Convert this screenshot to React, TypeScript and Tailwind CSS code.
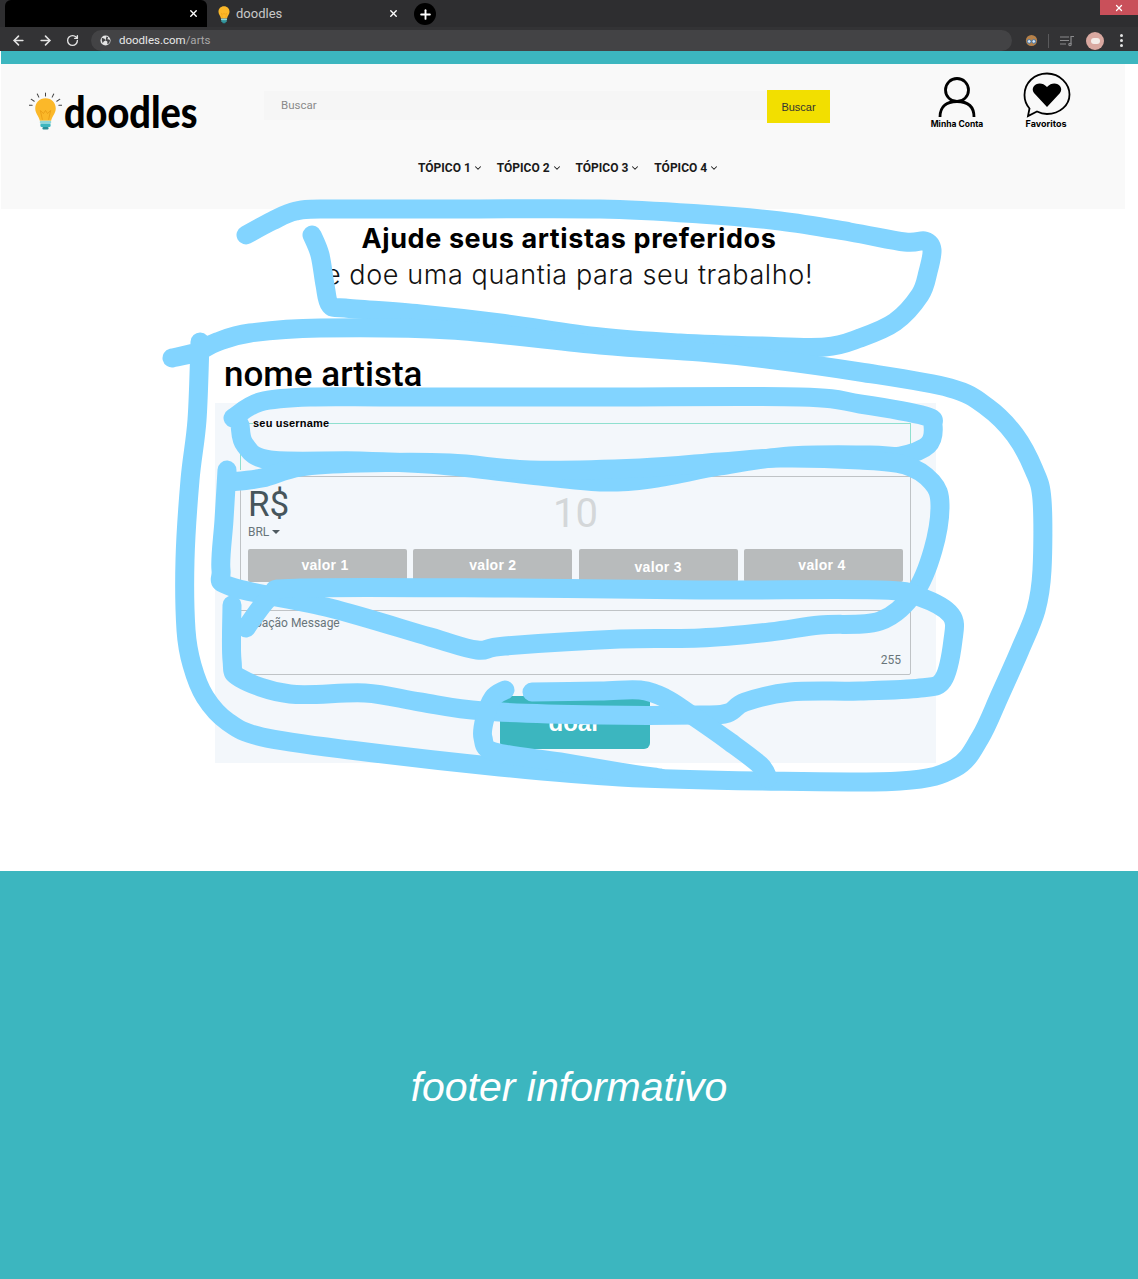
import React from 'react';
import { ArrowLeft, ArrowRight, RotateCw, X, Plus, ChevronDown } from 'lucide-react';

type Pt = [number, number];

// caminhos do rabisco azul por cima da página
const scribbles: Pt[][] = [
  [[246,235],[272,221],[296,211],[330,209],[460,209],[600,209],[700,214],[780,221],[850,232],[905,242],[925,241],[932,250],[928,272],[920,295],[895,322],[860,338],[825,347],[760,346],[680,343],[600,337],[500,323],[420,314],[345,308],[330,305],[325,285],[320,255],[312,235]],
  [[172,358],[197,352],[217,342],[250,333],[320,328],[450,330],[600,345],[700,352],[767,359],[860,372],[950,388],[987,407],[1015,435],[1034,470],[1042,500],[1042,570],[1036,610],[1020,650],[1000,695],[980,738],[955,768],[900,781],[760,781],[620,777],[500,767],[350,750],[262,737],[228,722],[205,697],[192,665],[186,630],[185,560],[190,480],[197,420],[200,342]],
  [[233,418],[260,402],[310,397],[400,397],[600,397],[800,397],[860,404],[925,416],[933,425],[928,445],[900,456],[870,455],[790,456],[720,466],[650,479],[600,482],[530,475],[440,465],[360,461],[270,460],[245,445],[240,425]],
  [[227,470],[224,520],[221,570],[232,587],[330,608],[430,637],[477,650],[505,646],[620,639],[700,638],[770,632],[820,625],[880,621],[915,592],[933,550],[940,505],[932,482],[905,465],[860,460],[780,458],[720,462],[640,468],[530,470],[450,463],[360,463],[300,467],[262,478],[228,482]],
  [[232,605],[232,660],[240,678],[290,694],[365,693],[420,702],[483,711],[600,715],[700,715],[728,713],[745,702],[790,692],[860,691],[920,688],[943,680],[953,640],[951,615],[920,597],[880,590],[700,590],[500,588],[300,588],[272,595],[246,628]],
  [[505,690],[493,698],[485,718],[483,738],[495,752],[560,762],[620,772],[660,778]],
  [[532,692],[600,691],[640,690],[665,698],[690,714],[730,742],[760,765],[768,778]],
];

// curva suave passando pelos pontos
const toPath = (pts: Pt[]) => {
  let d = `M${pts[0][0]} ${pts[0][1]}`;
  for (let i = 0; i < pts.length - 1; i++) {
    const p0 = pts[Math.max(i - 1, 0)];
    const p1 = pts[i];
    const p2 = pts[i + 1];
    const p3 = pts[Math.min(i + 2, pts.length - 1)];
    d += ` C${p1[0] + (p2[0] - p0[0]) / 6} ${p1[1] + (p2[1] - p0[1]) / 6} ${p2[0] - (p3[0] - p1[0]) / 6} ${p2[1] - (p3[1] - p1[1]) / 6} ${p2[0]} ${p2[1]}`;
  }
  return d;
};

const Bulb: React.FC<{ className?: string; rays?: boolean }> = ({ className, rays }) => (
  <svg viewBox="0 0 32 38" className={className}>
    {rays && (
      <g stroke="#444" strokeWidth="1" strokeLinecap="round">
        <path d="M16 1v3M8 2l1.5 3M24 2l-1.5 3M2 7l3 2M30 7l-3 2M0 13h3M32 13h-3" />
      </g>
    )}
    <path d="M16 6c-6 0-10 4.400-10 10 0 5 3.500 7 4.500 12h11c1-5 4.500-7 4.500-12 0-5.600-4-10-10-10z" fill="#fbb829" />
    <path d="M13 27l-2-9 3 3 2-3 2 3 3-3-2 9" fill="none" stroke="#e89b14" strokeWidth="0.8" />
    <rect x="10.500" y="28" width="11" height="3" rx="1" fill="#8fd6d8" />
    <rect x="11" y="31" width="10" height="3" rx="1" fill="#3cb6bf" />
    <rect x="13" y="34" width="6" height="2.500" rx="1" fill="#2a8f98" />
  </svg>
);

const topics = ['TÓPICO 1', 'TÓPICO 2', 'TÓPICO 3', 'TÓPICO 4'];
const amounts = [
  { label: 'valor 1', cls: 'pr-[5px]' },
  { label: 'valor 2', cls: '' },
  { label: 'valor 3', cls: 'pt-[3px]' },
  { label: 'valor 4', cls: 'pr-[3px]' },
];

export default function App() {
  return (
    <div className="relative w-[1138px] h-[1279px] overflow-hidden bg-white font-['Roboto',sans-serif]">
      {/* barra de abas */}
      <div className="h-[27px] bg-[#2e2e30] flex items-end">
        <div className="ml-[5px] w-[202px] h-[27px] bg-black rounded-t-md flex items-center justify-end pr-[8px]">
          <X size={11} strokeWidth={3} className="text-white" />
        </div>
        <div className="w-[200px] h-[27px] flex items-center pl-[8px] pr-[8px]">
          <Bulb className="w-[18px] h-[21px] mr-[3px]" />
          <span className="text-[13px] pt-px text-[#c8c8c8] flex-1">doodles</span>
          <X size={11} strokeWidth={3} className="text-white" />
        </div>
        <div className="ml-[7px] mb-[2px] w-[22px] h-[22px] rounded-full bg-black flex items-center justify-center">
          <Plus size={15} strokeWidth={3} className="text-white" />
        </div>
        <div className="ml-auto self-start w-[38px] h-[15px] bg-[#c9505a] flex items-center justify-center">
          <X size={10} strokeWidth={3} className="text-white" />
        </div>
      </div>
      {/* barra de endereço */}
      <div className="h-[24px] pt-[3px] bg-[#333335] flex items-center">
        <ArrowLeft size={15} strokeWidth={2.5} className="ml-[11px] text-[#e4e4e4]" />
        <ArrowRight size={15} strokeWidth={2.5} className="ml-[12px] text-[#e4e4e4]" />
        <RotateCw size={13} strokeWidth={2.5} className="ml-[13px] text-[#e4e4e4]" />
        <div className="ml-[12px] w-[921px] h-[21px] rounded-full bg-[#434345] flex items-center pl-[9px]">
          <svg viewBox="0 0 12 12" className="w-[11px] h-[11px]">
            <circle cx="6" cy="6" r="5.500" fill="#e4e4e4" />
            <path d="M2 3l3 1 1 2-2 1-1 2-1-3zM7 1.500l2 1-1 2 2 .5 1 1-1 3-2 1 0-3-2-1z" fill="#434345" />
          </svg>
          <span className="ml-[8px] pt-px text-[11.5px] text-[#e8e8e8]">
            doodles.com<span className="text-[#a8a8a8]">/arts</span>
          </span>
        </div>
        <svg viewBox="0 0 14 14" className="ml-[13px] w-[13px] h-[13px]">
          <circle cx="7" cy="7" r="6" fill="#b5814a" />
          <circle cx="4.500" cy="8" r="2" fill="#d8e8f5" stroke="#3a6ea5" />
          <circle cx="9.500" cy="8" r="2" fill="#d8e8f5" stroke="#3a6ea5" />
        </svg>
        <div className="ml-[10px] w-px h-[14px] bg-[#5a5a5c]" />
        <svg viewBox="0 0 14 12" className="ml-[11px] w-[14px] h-[12px]" fill="none" stroke="#8a8a8c" strokeWidth="1.200">
          <path d="M0 2h9M0 5.500h9M0 9h6M11 9V1.500h3" />
          <circle cx="10" cy="9.500" r="1.200" />
        </svg>
        <div className="ml-[12px] w-[18px] h-[18px] rounded-full bg-[#d9a8a0] flex items-center justify-center">
          <div className="w-[9px] h-[6px] rounded-full bg-[#f4ece8]" />
        </div>
        <div className="ml-[16px] flex flex-col gap-[2px]">
          <div className="w-[3px] h-[3px] rounded-full bg-[#e4e4e4]" />
          <div className="w-[3px] h-[3px] rounded-full bg-[#e4e4e4]" />
          <div className="w-[3px] h-[3px] rounded-full bg-[#e4e4e4]" />
        </div>
      </div>

      <div className="h-[13px] ml-px bg-[#3cb6bf]" />

      {/* cabeçalho do site */}
      <header className="ml-px w-[1124px] h-[145px] bg-[#f9f9f9]">
        <div className="h-[72px] flex items-start relative">
          <div className="ml-[28px] mt-[25px] flex items-center w-[235px]">
            <Bulb rays className="w-[33px] h-[39px] shrink-0" />
            <span className="inline-block ml-[2px] origin-left scale-x-[0.86] text-[44px] leading-[44px] font-black text-black font-['Lato',sans-serif]">doodles</span>
          </div>
          <div className="mt-[27px] w-[503px] h-[29px] bg-[#f6f6f6] flex items-center pl-[17px] text-[11.5px] text-[#8a8a8a]">Buscar</div>
          <button className="mt-[26px] w-[63px] h-[33px] pt-px bg-[#f2df00] text-[11px] text-[#333] font-['Liberation_Sans',sans-serif]">Buscar</button>
          <div className="ml-[97px] mt-[12px] w-[60px] flex flex-col items-center">
            <svg viewBox="0 0 40 42" className="w-[40px] h-[42px]" fill="none" stroke="#000" strokeWidth="2.800">
              <circle cx="20" cy="14" r="11.500" />
              <path d="M3 41c0-11 7-15.500 17-15.500S37 30 37 41" />
            </svg>
            <span className="mt-px text-[8.5px] leading-[10px] font-bold text-black font-['Inter',sans-serif] whitespace-nowrap">Minha Conta</span>
          </div>
          <div className="ml-[29px] mt-[8px] w-[60px] flex flex-col items-center">
            <svg viewBox="0 0 48 46" className="ml-[2px] w-[48px] h-[46px]">
              <path d="M24 1.500C11 1.500 1.500 11 1.500 23c0 5.500 2 10 5 13.500L5 44l9-4.500c3 1.500 6.500 2.500 10 2.500 13 0 22.500-9 22.500-19.500S37 1.500 24 1.500z" fill="none" stroke="#000" strokeWidth="1.800" />
              <path d="M24 35L11 21c-5-7 6-14 13-6 7-8 18-1 13 6z" fill="#000" />
            </svg>
            <span className="mt-px text-[9px] leading-[10px] font-bold text-black font-['Inter',sans-serif]">Favoritos</span>
          </div>
        </div>
        <nav className="mt-[23px] ml-[417px] flex items-center gap-[14px] text-[12px] font-bold text-[#1a1a1a]">
          {topics.map((t) => (
            <span key={t} className="flex items-center gap-[2px]">
              {t}
              <ChevronDown size={10} strokeWidth={2.5} />
            </span>
          ))}
        </nav>
      </header>

      {/* conteúdo */}
      <main className="h-[662px] pt-[14px]">
        <h1 className="text-center text-[27px] leading-[32px] font-bold text-black font-['Inter',sans-serif] tracking-[0.6px]">
          Ajude seus artistas preferidos
        </h1>
        <p className="text-center text-[27px] leading-[40px] font-light text-[#111] font-['Inter',sans-serif] tracking-[0.6px]">
          e doe uma quantia para seu trabalho!
        </p>
        <h2 className="mt-[58px] ml-[224px] text-[35px] leading-[44px] font-medium text-black font-['Roboto',sans-serif]">
          nome artista
        </h2>
        <form className="mt-[6px] ml-[215px] w-[721px] h-[360px] bg-[#f3f7fb] px-[25px] pt-[12px]">
          <fieldset className="h-[55px] border border-b-0 border-[#8fe0cf]">
            <legend className="ml-[12px] text-[11px] leading-[16px] font-bold text-black font-['Liberation_Sans',sans-serif] tracking-[0.2px]">seu username</legend>
          </fieldset>
          <div className="mt-[6px] h-[110px] border-x border-t border-[#bfc3c6] px-[7px]">
            <div className="h-[72px] relative">
              <div className="pt-[8px] text-[35px] leading-[39px] text-[#46555b]">R$</div>
              <div className="flex items-center gap-[3px] pt-px text-[12px] leading-[14px] text-[#68757a]">
                BRL
                <span className="border-x-[4px] border-t-[4px] border-x-transparent border-t-[#4f5a60]" />
              </div>
              <div className="absolute left-0 right-0 top-[13px] text-center text-[40px] leading-[48px] text-[#d4d7d9]">10</div>
            </div>
            <div className="flex justify-between">
              {amounts.map((a) => (
                <button key={a.label} type="button" className={`w-[159px] shrink-0 h-[33px] rounded-[2px] bg-[#b8bbbc] text-[14px] font-bold text-white font-['Liberation_Sans',sans-serif] tracking-[0.3px] ${a.cls}`}>
                  {a.label}
                </button>
              ))}
            </div>
          </div>
          <div className="mt-[24px] h-[65px] border border-[#bfc3c6] rounded-b-[2px] px-[6px] pt-[5px] flex flex-col justify-between pb-[7px]">
            <span className="text-[12px] leading-[14px] text-[#68757a]">Doação Message</span>
            <span className="self-end pr-[3px] text-[12px] leading-[14px] text-[#68757a]">255</span>
          </div>
          <div className="mt-[21px] flex justify-center pr-[2px]">
            <button type="button" className="w-[150px] h-[53px] rounded-[6px] bg-[#3cb6bf] text-[24px] font-bold text-white font-['Liberation_Sans',sans-serif]">
              doar
            </button>
          </div>
        </form>
      </main>

      <footer className="h-[408px] pt-[26px] bg-[#3cb6bf] flex items-center justify-center">
        <span className="text-[41px] italic text-white font-['Liberation_Sans',sans-serif]">footer informativo</span>
      </footer>

      {/* rabisco por cima de tudo */}
      <svg className="absolute inset-0 w-[1138px] h-[1279px] pointer-events-none" viewBox="0 0 1138 1279" fill="none" stroke="#82d4ff" strokeWidth="19" strokeLinecap="round" strokeLinejoin="round">
        {scribbles.map((s, i) => (
          <path key={i} d={toPath(s)} />
        ))}
      </svg>
    </div>
  );
}
